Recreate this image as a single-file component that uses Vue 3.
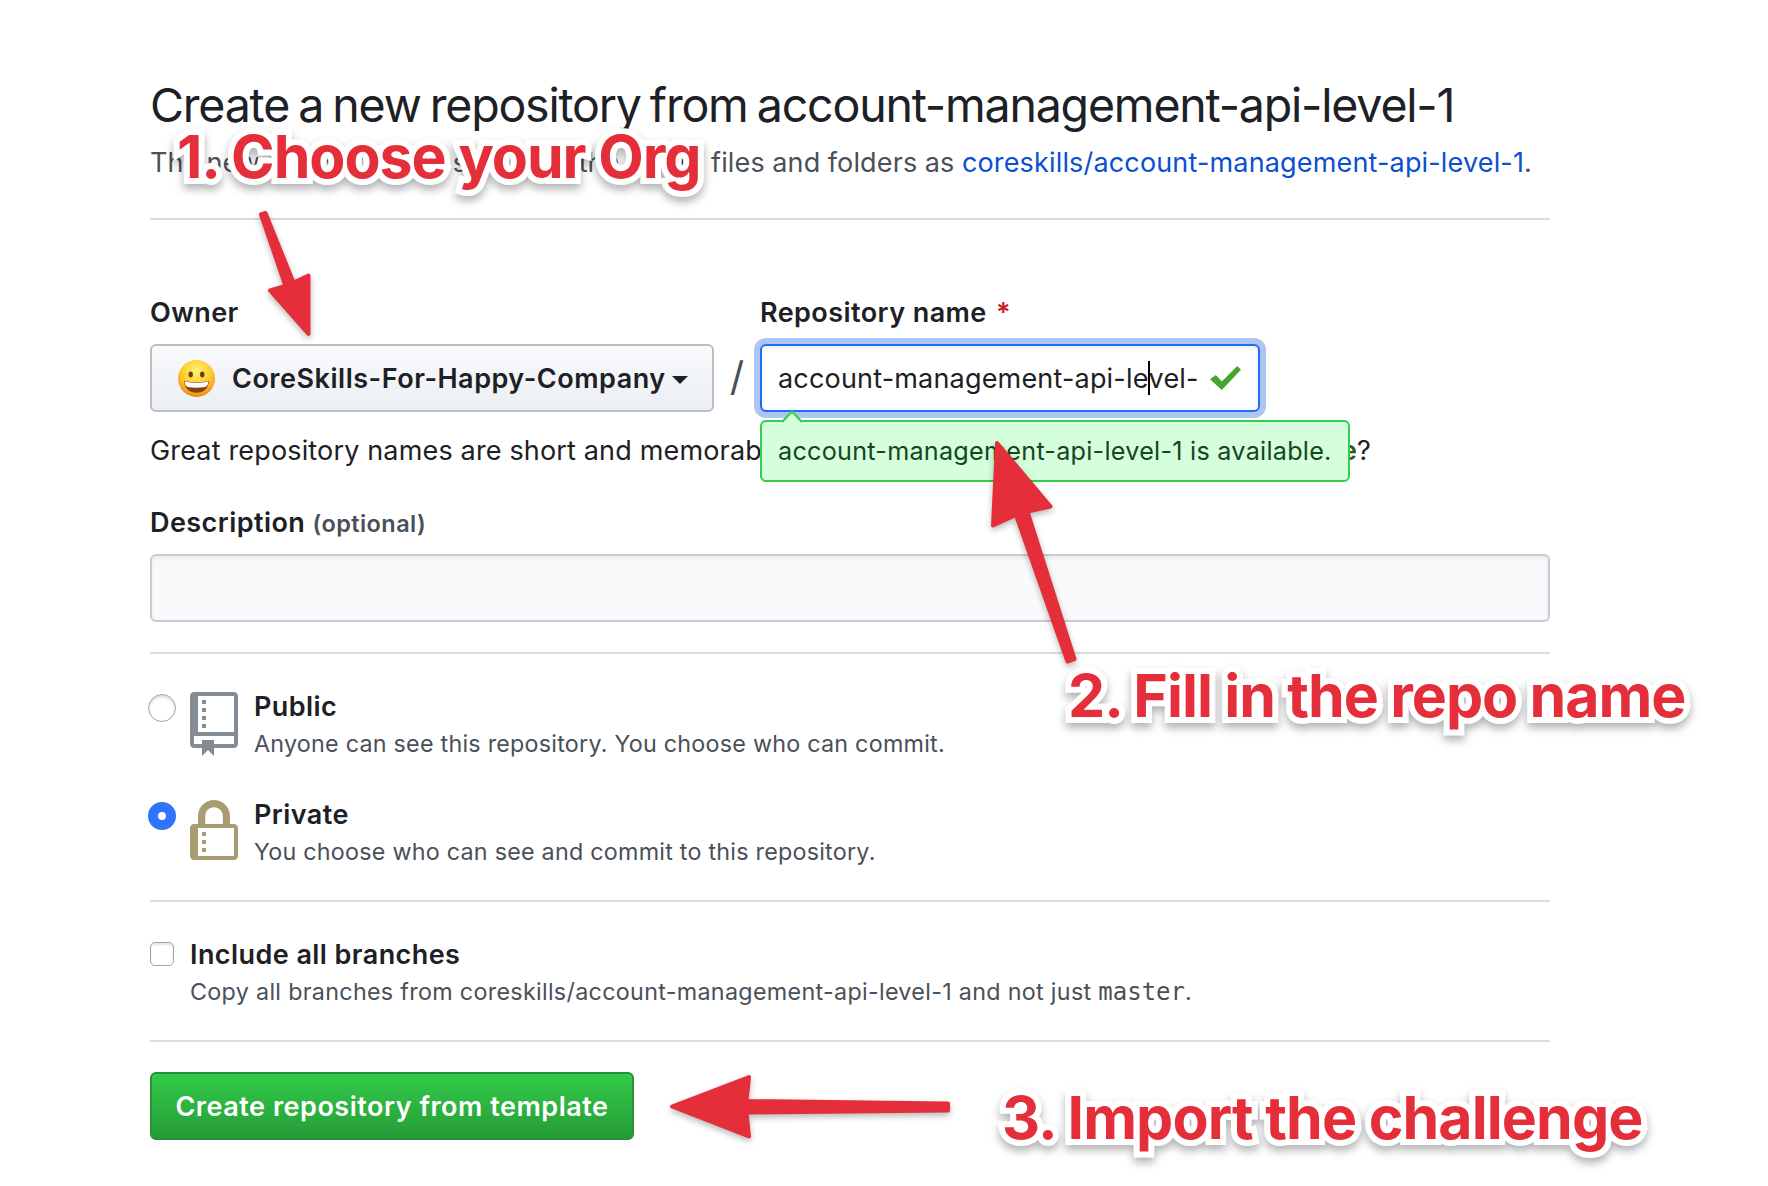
<script setup>
import { ref } from 'vue'

const template = 'account-management-api-level-1'
const visibility = ref('private')
const choices = [
  { id: 'public', title: 'Public', note: 'Anyone can see this repository. You choose who can commit.' },
  { id: 'private', title: 'Private', note: 'You choose who can see and commit to this repository.' },
]
</script>

<template>
  <div class="page">
    <main class="content">
      <h1>Create a new repository from {{ template }}</h1>
      <p class="lead"><span class="lead-start">The new repository will start with the same</span><span class="lead-end">files and folders as <a>coreskills/{{ template }}</a>.</span></p>
      <hr class="rule rule-head" />

      <div class="names">
        <div class="owner">
          <div class="label">Owner</div>
          <button class="select">
            <svg class="face" viewBox="0 0 36 36">
              <defs>
                <radialGradient id="skin" cx=".5" cy=".3" r=".72">
                  <stop offset="0" stop-color="#fff27a" />
                  <stop offset=".5" stop-color="#fdd032" />
                  <stop offset=".82" stop-color="#f9a51c" />
                  <stop offset="1" stop-color="#e57d0d" />
                </radialGradient>
              </defs>
              <circle cx="18" cy="18" r="18" fill="url(#skin)" />
              <ellipse cx="12.4" cy="14.2" rx="2.1" ry="2.9" fill="#6b3d0b" />
              <ellipse cx="23.6" cy="14.2" rx="2.1" ry="2.9" fill="#6b3d0b" />
              <path d="M5.8 20.4Q18 23.2 30.2 20.4Q28.8 31.8 18 31.8T5.8 20.4Z" fill="#80450f" />
              <path d="M6.5 21Q18 23.6 29.5 21Q29.2 25.6 26.5 26.2Q18 27.6 9.5 26.2Q6.8 25.6 6.5 21Z" fill="#fff" />
            </svg>
            <span class="owner-name">CoreSkills-For-Happy-Company</span>
            <i class="arrow-down"></i>
          </button>
        </div>
        <div class="slash">/</div>
        <div class="repo">
          <div class="label">Repository name <span class="star">*</span></div>
          <div class="field">
            <span class="value">account-management-api-le<i class="cursor"></i>vel-</span>
            <svg class="check" viewBox="0 0 31 24"><path d="M0 13.3 5.8 9l6 6.4L27.2 0 31 3.8 11.8 24Z" fill="#47a52b" /></svg>
            <div class="tip">{{ template }} is available.
              <svg class="notch" viewBox="0 0 22 13"><path d="M1 13 11 1.5 21 13Z" fill="#d5ffdc" /><path d="M1 12 11 1.5 21 12" fill="none" stroke="#33cf4c" stroke-width="2" /></svg>
            </div>
          </div>
        </div>
      </div>

      <p class="hint"><span>Great repository names are short and memorable.</span><span>Need inspiration? How about <b>super-waffle</b>?</span></p>

      <div class="label desc-label">Description <small>(optional)</small></div>
      <div class="desc"></div>
      <hr class="rule rule-desc" />

      <div class="choices">
        <div v-for="c in choices" :key="c.id" class="choice">
          <span class="radio" :class="{ on: visibility === c.id }"></span>
          <svg v-if="c.id === 'public'" class="icon" viewBox="0 0 12 16" fill="#848c95"><path fill-rule="evenodd" d="M4 9H3V8h1v1zm0-3H3v1h1V6zm0-2H3v1h1V4zm0-2H3v1h1V2zm8-1v12c0 .55-.45 1-1 1H6v2l-1.5-1.5L3 16v-2H1c-.55 0-1-.45-1-1V1c0-.55.45-1 1-1h10c.55 0 1 .45 1 1zm-1 10H1v2h2v-1h3v1h5v-2zm0-10H2v9h9V1z" /></svg>
          <svg v-else class="icon" viewBox="0 0 12 16" fill="#a99c73"><path fill-rule="evenodd" d="M4 13H3v-1h1v1zm8-6v7c0 .55-.45 1-1 1H1c-.55 0-1-.45-1-1V7c0-.55.45-1 1-1h1V4c0-2.2 1.8-4 4-4s4 1.8 4 4v2h1c.55 0 1 .45 1 1zM3.8 6h4.41V4c0-1.22-.98-2.2-2.2-2.2-1.22 0-2.2.98-2.2 2.2v2H3.8zM11 7H2v7h9V7zM4 8H3v1h1V8zm0 2H3v1h1v-1z" /></svg>
          <div>
            <div class="title">{{ c.title }}</div>
            <div class="note">{{ c.note }}</div>
          </div>
        </div>
      </div>
      <hr class="rule rule-row" />

      <div class="branches">
        <span class="box"></span>
        <div>
          <div class="title">Include all branches</div>
          <div class="note copy">Copy all branches from coreskills/{{ template }} and not just <code>master</code>.</div>
        </div>
      </div>
      <hr class="rule rule-row" />

      <button class="create">Create repository from template</button>
    </main>

    <svg class="arrows" viewBox="0 0 1768 1186">
      <path d="M261 214.5 265.5 213 293.5 282.5 308.5 275.5V334L270 290.5 285.5 286Z" />
      <path d="M997 443 1050.5 506.5 1027.5 511.5 1074.5 659 1067.5 661.5 1016 515 993 525.5Z" />
      <path d="M672 1106.5 749 1077 746.5 1101 948 1103.5V1110.5L746.5 1112.5 749 1136.5Z" />
    </svg>
    <div class="callout one">1. Choose your Org</div>
    <div class="callout two">2. Fill in the repo name</div>
    <div class="callout three">3. Import the challenge</div>
  </div>
</template>

<style>
body { margin: 0; background: #fff; }
</style>

<style scoped>
.page {
  position: relative;
  width: 1768px;
  height: 1186px;
  overflow: hidden;
  background: #fff;
  color: #1d2025;
  font-family: Inter, "Liberation Sans", sans-serif;
  font-size: 27px;
  line-height: 42px;
  letter-spacing: .16px;
  white-space: nowrap;
}
.content { width: 1400px; margin-left: 150px; padding-top: 69px; }
h1 { margin: 0; font-size: 46.5px; font-weight: 400; line-height: 72px; letter-spacing: -1.2px; word-spacing: -2.7px; }
p { margin: 0; }
.lead { display: flex; margin-top: 1px; color: #4a5059; }
.lead-start { width: 561px; letter-spacing: -.05px; }
.lead-end { word-spacing: -.4px; }
.lead a { color: #0b50d0; }
.rule { height: 2px; margin: 0; border: 0; background: #d9dce1; }
.rule-head { margin-top: 34px; background: #dadbe2; }
.rule-desc { margin-top: 30px; }
.rule-row { margin-top: 31px; }
.label, .title { font-weight: 600; letter-spacing: .43px; }
.names { display: flex; align-items: flex-end; margin-top: 72px; }
.label { margin-bottom: 10px; }
.star { margin-left: 2px; color: #cb1a2b; }
.select {
  display: flex;
  align-items: center;
  box-sizing: border-box;
  width: 564px;
  height: 68px;
  padding: 0 0 0 26px;
  border: 2px solid #bcbec4;
  border-radius: 6px;
  background: linear-gradient(#f9fafc, #ebeff3);
  color: inherit;
  font: 600 27px/42px Inter, sans-serif;
  letter-spacing: .52px;
}
.owner-name, .value { padding-top: 2px; }
.face { width: 37px; height: 37px; margin-right: 17px; }
.arrow-down { margin: 4px 0 0 6px; border: 8px solid transparent; border-top-color: #1d2025; border-bottom: 0; }
.slash { width: 46px; height: 68px; color: #4a5059; font-size: 40px; line-height: 66px; text-align: center; }
.field {
  position: relative;
  display: flex;
  align-items: center;
  box-sizing: border-box;
  width: 500px;
  height: 68px;
  padding-left: 16px;
  border: 2px solid #1b6ffb;
  border-radius: 6px;
  background: #fff;
  box-shadow: inset 0 2px 4px rgba(27, 31, 35, .08), 0 0 0 6px #adc5f0;
  letter-spacing: .18px;
}
.cursor { display: inline-block; width: 2px; height: 34px; margin: 0 -1px; background: #000; vertical-align: -7px; }
.check { width: 31px; height: 24px; margin-left: auto; margin-right: 17px; }
.tip {
  position: absolute;
  left: -2px;
  top: 74px;
  z-index: 2;
  box-sizing: border-box;
  width: 590px;
  height: 62px;
  padding: 8px 16px;
  border: 2px solid #33cf4c;
  border-radius: 6px;
  background: #d5ffdc;
  color: #144620;
  font-size: 25.2px;
  letter-spacing: .25px;
}
.notch { position: absolute; left: 19px; top: -12px; width: 22px; height: 13px; }
.hint { display: flex; justify-content: space-between; width: 1221px; margin-top: 18px; }
.hint b { color: #2f5a1c; font-weight: 600; }
.desc-label { margin-top: 30px; margin-bottom: 9px; }
.desc-label small { color: #4a5059; font-size: 23.5px; }
.desc { box-sizing: border-box; height: 68px; border: 2px solid #c8cbd2; border-radius: 6px; background: #f9fafc; box-shadow: inset 0 2px 4px rgba(27, 31, 35, .08); }
.choices { display: flex; flex-direction: column; gap: 33px; padding-top: 32px; }
.choice, .branches { display: flex; align-items: flex-start; }
.note { margin-top: -1px; color: #4a5059; font-size: 23.3px; line-height: 34px; letter-spacing: .24px; }
.radio { box-sizing: border-box; width: 28px; height: 28px; margin: 8px 14px 0 -2px; border: 1.5px solid #a6a6a6; border-radius: 50%; box-shadow: inset 0 2px 3px rgba(0, 0, 0, .16); }
.radio.on { border: 10px solid #2f73fe; box-shadow: none; }
.icon { width: 48px; height: 64px; margin: 6px 16px -4px 0; }
.branches { padding-top: 32px; }
.box { box-sizing: border-box; width: 24px; height: 24px; margin: 8px 16px 0 0; border: 1.5px solid #a4a4a4; border-radius: 5px; box-shadow: inset 0 2px 2px rgba(0, 0, 0, .1); }
.copy { letter-spacing: .31px; }
code { font: 24px/34px "DejaVu Sans Mono", monospace; letter-spacing: 0; }
.create {
  display: block;
  width: 484px;
  height: 68px;
  margin-top: 30px;
  padding: 2px 0 0;
  border: 2px solid #279039;
  border-radius: 6px;
  background: linear-gradient(#33cc4a, #269a37) border-box;
  color: #fff;
  font: 600 27px/42px Inter, sans-serif;
  letter-spacing: .52px;
}
.arrows { position: absolute; inset: 0; z-index: 3; fill: #e42f3a; stroke: #e42f3a; stroke-width: 4; stroke-linejoin: round; filter: drop-shadow(0 3px 3px rgba(0, 0, 0, .28)); }
.callout {
  position: absolute;
  z-index: 4;
  color: #e42f3a;
  font-size: 59px;
  font-weight: 700;
  line-height: 70px;
  -webkit-text-stroke: 12px #fff;
  paint-order: stroke fill;
  stroke-linejoin: round;
  filter: drop-shadow(0 5px 4px rgba(0, 0, 0, .3));
}
.one { left: 177px; top: 122px; letter-spacing: -1.08px; }
.two { left: 1068px; top: 661px; letter-spacing: -1.02px; word-spacing: -.6px; }
.three { left: 1002px; top: 1083px; letter-spacing: -.92px; word-spacing: -.4px; }
</style>
